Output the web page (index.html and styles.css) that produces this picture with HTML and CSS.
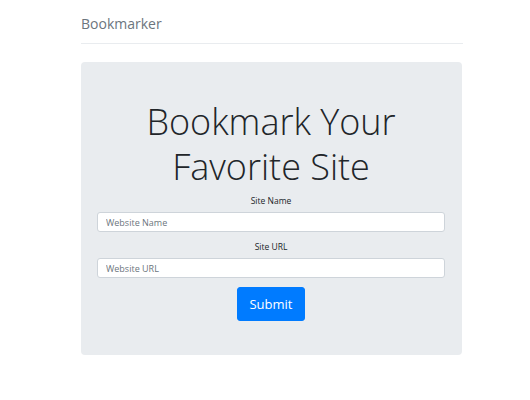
FILE: index.html
```html
<!DOCTYPE html>
<html>
<head>
<meta charset="utf-8">
<link rel="stylesheet" href="styles.css">
</head>
<body>
<div class="container">
  <header class="header">
    <h3 class="brand">Bookmarker</h3>
  </header>
  <div class="jumbotron">
    <h1 class="title">Bookmark Your Favorite Site</h1>
    <form class="form">
      <label class="label">Site Name</label>
      <input class="input" type="text" placeholder="Website Name">
      <label class="label">Site URL</label>
      <input class="input" type="text" placeholder="Website URL">
      <button class="btn" type="button">Submit</button>
    </form>
  </div>
</div>
</body>
</html>
```
FILE: styles.css
```css
* { box-sizing: border-box; }
html, body { margin: 0; padding: 0; background: #fff; }
body { font-family: "Open Sans", "Noto Sans", sans-serif; color: #212529; }
.container {
  width: 382px;
  margin-left: 81px;
  display: flex;
  flex-direction: column;
}
.header {
  padding-top: 14px;
  height: 44px;
  border-bottom: 1px solid #e9ecef;
}
.brand {
  margin: 0;
  font-size: 14px;
  line-height: 20px;
  font-weight: 400;
  color: #6c757d;
}
.jumbotron {
  margin-top: 18px;
  width: 381px;
  height: 293px;
  background: #e9ecef;
  border-radius: 4px;
  padding: 37px 17px 0 16px;
  display: flex;
  flex-direction: column;
  align-items: center;
}
.title {
  margin: 0;
  width: 100%;
  text-align: center;
  font-size: 36px;
  line-height: 45px;
  font-weight: 300;
  color: #212529;
}
.form {
  width: 100%;
  display: flex;
  flex-direction: column;
  align-items: center;
  margin-top: 6px;
}
.label {
  font-size: 8.5px;
  line-height: 12px;
  color: #212529;
  margin-bottom: 5px;
}
.input {
  width: 100%;
  height: 20px;
  border: 1px solid #ced4da;
  border-radius: 3px;
  background: #fff;
  padding: 0 8px;
  font-family: inherit;
  font-size: 9px;
  color: #495057;
  margin-bottom: 9px;
}
.input::placeholder { color: #6c757d; }
.btn {
  width: 68px;
  height: 34px;
  background: #007bff;
  border: 1px solid #007bff;
  border-radius: 3px;
  color: #fff;
  font-family: inherit;
  font-size: 13px;
  margin-top: 0;
  padding: 0;
}
```
